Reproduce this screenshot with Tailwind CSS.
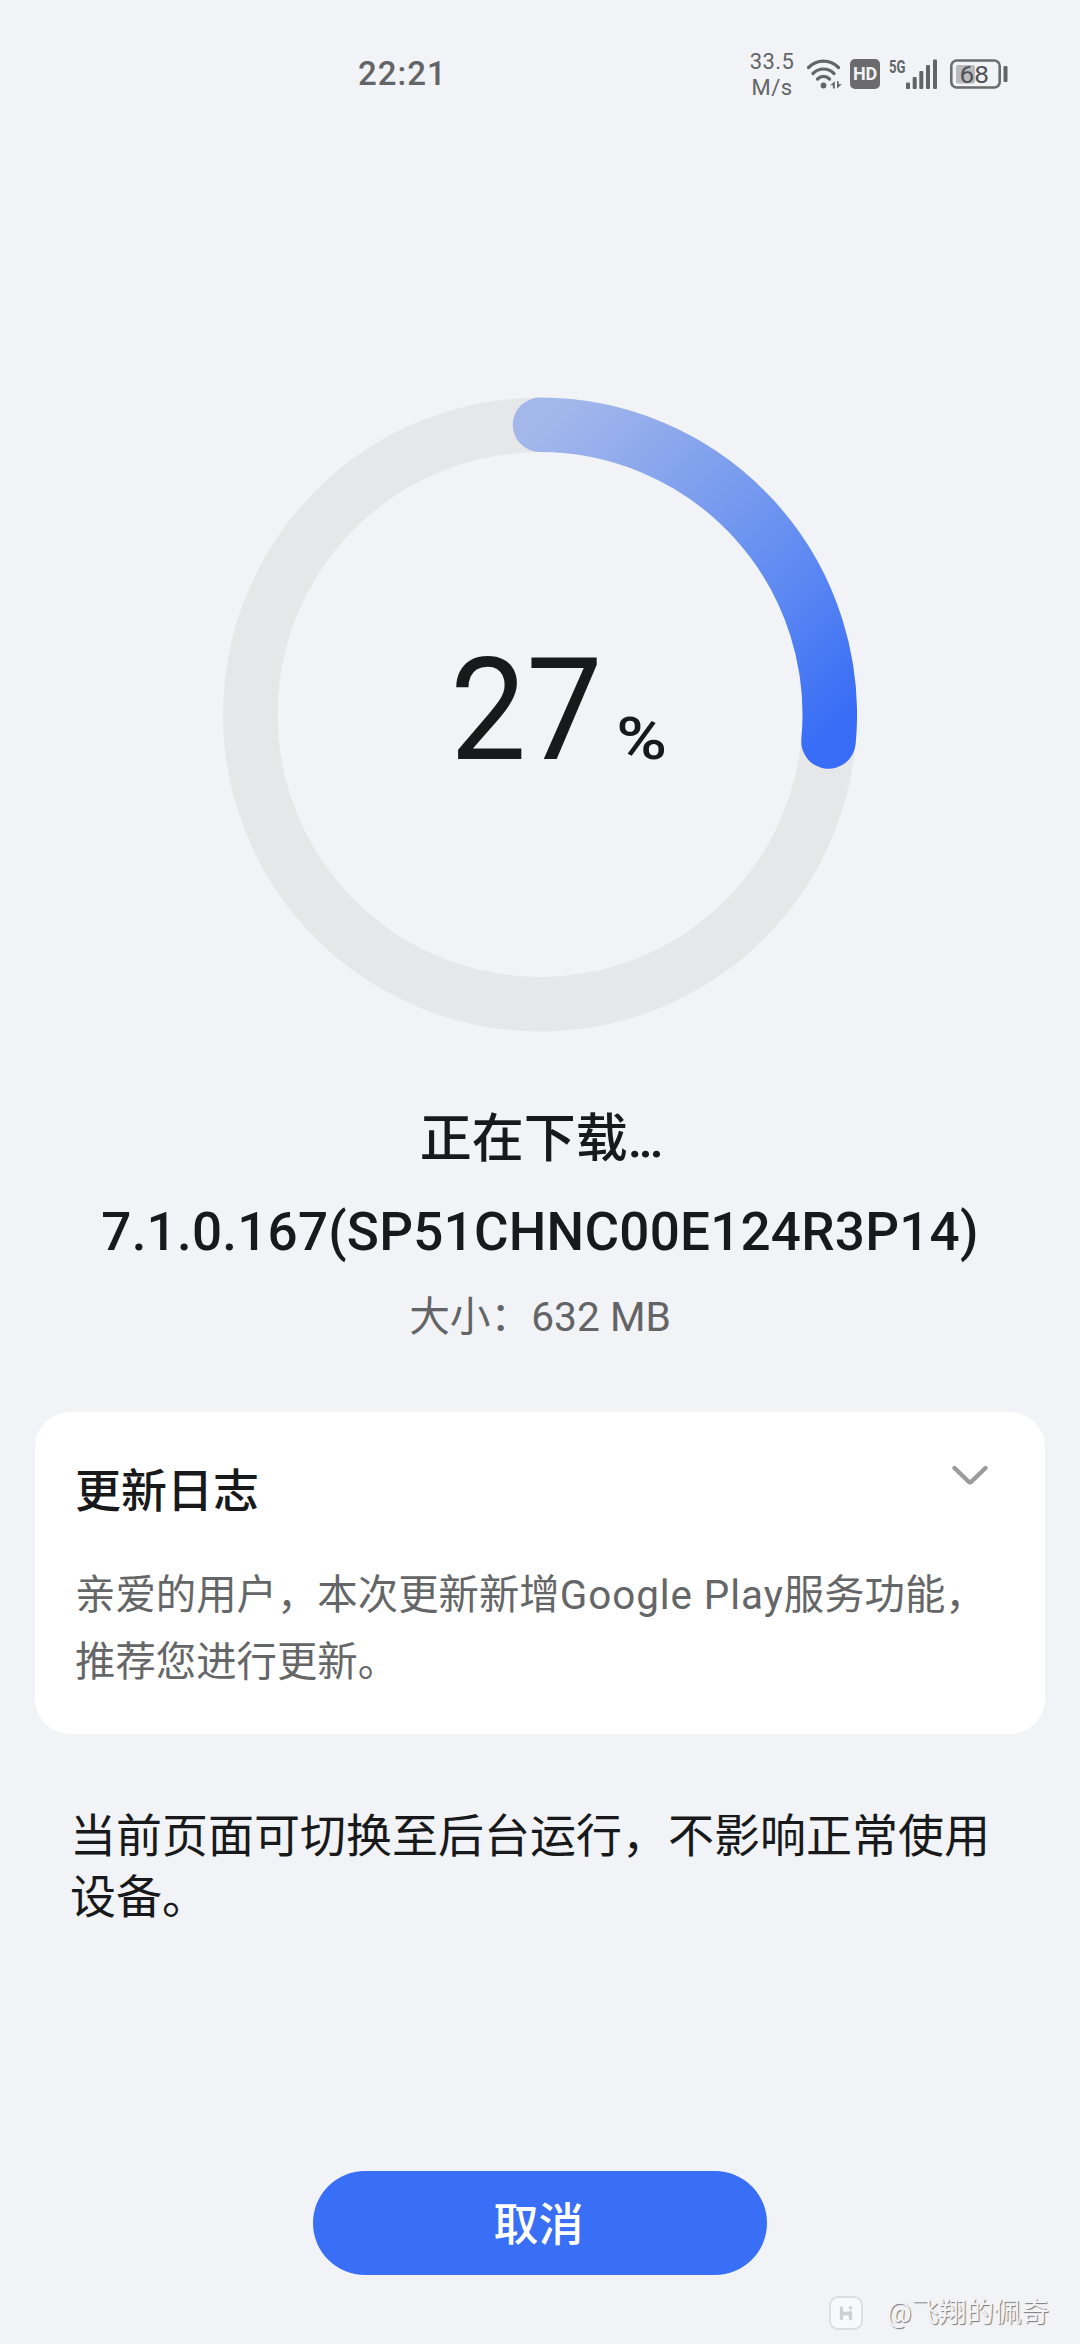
<!DOCTYPE html>
<html lang="zh-CN">
<head>
<meta charset="utf-8">
<title>系统更新</title>
<script src="https://cdn.jsdelivr.net/npm/@tailwindcss/browser@4"></script>
</head>
<body class="bg-[#f1f3f7]">
<div class="flex h-[2344px] w-[1080px] flex-col overflow-hidden bg-[#f1f3f7] font-['Roboto','Noto_Sans_CJK_SC',sans-serif] text-[#18191a]">

  <!-- status bar -->
  <header class="flex h-[148px] shrink-0 items-center justify-between pr-[72px] pl-[358px] text-[#636466]">
    <span class="text-[33px] leading-[40px] font-medium tracking-[1px]">22:21</span>
    <div class="flex items-center">
      <div class="mr-[11px] w-[46px] pt-[1px] text-center text-[22px] leading-[26px] tracking-[0.4px]">33.5<br>M/s</div>
      <svg class="mr-[8px] h-[32px] w-[36px]" viewBox="0 0 36 32" fill="none" stroke="#636466" stroke-width="3.2" stroke-linecap="round">
        <path d="M2.500 9.500C11 1 24 1 32.500 9.500"/>
        <path d="M7 15.500C13 9.500 22 9.500 28 15.500"/>
        <path d="M11.500 21C15 17.500 20 17.500 23.500 21"/>
        <circle cx="17.500" cy="27.500" r="2.900" fill="#636466" stroke="none"/>
        <path d="M28.800 23.200V30.500H26.900V27.300H24.200ZM31 30.500V23.200H32.700V26.300H35.800Z" fill="#636466" stroke="none"/>
      </svg>
      <div class="mr-[9px] flex h-[30px] w-[30px] items-center justify-center rounded-[5px] bg-[#6b6b6d] text-[18px] leading-none font-bold tracking-[-0.3px] text-[#f1f3f7]">HD</div>
      <svg class="mr-[12px] h-[34px] w-[49px] overflow-visible" viewBox="0 -1 49 34" fill="#636466">
        <text x="0" y="14.500" font-size="18" font-weight="700" textLength="16.500" lengthAdjust="spacingAndGlyphs">5G</text>
        <rect x="17" y="24.500" width="4" height="6.500" rx="1"/>
        <rect x="23.700" y="19" width="4" height="12" rx="1"/>
        <rect x="30.300" y="13" width="4" height="18" rx="1"/>
        <rect x="37" y="7" width="4" height="24" rx="1"/>
        <rect x="44" y="1.500" width="4" height="29.500" rx="1"/>
      </svg>
      <svg class="h-[32px] w-[58px]" viewBox="0 0 58 32">
        <rect x="1.300" y="2.500" width="48.400" height="27" rx="5.500" fill="none" stroke="#6b6b6d" stroke-width="2.600"/>
        <rect x="6" y="7" width="19" height="18.500" rx="2" fill="#b9babc"/>
        <rect x="53.500" y="8" width="4" height="16" rx="1" fill="#636466"/>
        <text x="9.500" y="24.500" font-size="24" fill="#505153" textLength="29.500" lengthAdjust="spacingAndGlyphs">68</text>
      </svg>
    </div>
  </header>

  <!-- progress ring -->
  <section class="mt-[249px] grid h-[635px] w-[634px] shrink-0 place-items-center self-center">
    <svg class="col-start-1 row-start-1 h-[635px] w-[634px]" viewBox="223 397 634 635" fill="none" stroke-width="54.500">
      <defs>
        <linearGradient id="arc" gradientUnits="userSpaceOnUse" x1="540" y1="425" x2="840" y2="725">
          <stop offset="0" stop-color="#a3b7ea"/>
          <stop offset="0.180" stop-color="#92acec"/>
          <stop offset="0.500" stop-color="#7096ef"/>
          <stop offset="0.750" stop-color="#5583f3"/>
          <stop offset="0.920" stop-color="#4073f4"/>
          <stop offset="1" stop-color="#386cf7"/>
        </linearGradient>
      </defs>
      <circle cx="540" cy="714.500" r="289.700" stroke="#e6e7e9"/>
      <path d="M540 424.800A289.700 289.700 0 0 1 828.500 741.500" stroke="url(#arc)" stroke-linecap="round"/>
    </svg>
    <div class="col-start-1 row-start-1 flex items-baseline pr-[2px] pb-[9px] pl-[39px]">
      <span class="origin-left scale-x-[0.95] text-[143px] leading-[160px]">27</span>
      <span class="ml-[12px] origin-right scale-x-[1.15] text-[60px] leading-[60px] font-medium">%</span>
    </div>
  </section>

  <!-- package information -->
  <section class="mt-[68px] flex shrink-0 flex-col items-center whitespace-nowrap">
    <h1 class="text-[52px] leading-[80px] font-medium">正在下载<span class="tracking-[-3.600px]">...</span></h1>
    <p class="mt-[12px] text-[53px] leading-[80px] font-medium tracking-[0.230px]">7.1.0.167(SP51CHNC00E124R3P14)</p>
    <p class="mt-[15px] text-[40.700px] leading-[60px] text-[#636466]">大小：632 MB</p>
  </section>

  <!-- change log -->
  <section class="mx-[35px] mt-[65px] h-[322px] shrink-0 rounded-[35px] bg-white pt-[49px] pr-[57px] pl-[40px]">
    <div class="flex justify-between">
      <h2 class="text-[46px] leading-[60px] font-medium">更新日志</h2>
      <svg class="mt-[3px] h-[22px] w-[36px]" viewBox="0 0 36 22" fill="none" stroke="#9b9b9c" stroke-width="4.400" stroke-linecap="round" stroke-linejoin="round"><path d="M2.500 4L16.500 17.500Q18 18.800 19.500 17.500L33.500 4"/></svg>
    </div>
    <p class="mt-[41px] text-[40.400px] leading-[67.400px] whitespace-nowrap text-[#656667]">亲爱的用户，本次更新新增<span class="tracking-[0.950px]">Google Play</span>服务功能，<br>推荐您进行更新。</p>
  </section>

  <p class="mt-[72px] ml-[70px] shrink-0 text-[46px] leading-[61px] whitespace-nowrap">当前页面可切换至后台运行，不影响正常使用<br>设备。</p>

  <button class="mt-[243px] h-[104px] w-[454px] shrink-0 self-center rounded-full bg-[#396ef7] pt-[5px] pr-[3px] text-[45px] leading-[60px] font-medium text-white">取消</button>

  <!-- author mark -->
  <footer class="mt-[20px] mr-[31px] flex shrink-0 items-center self-end">
    <svg class="mr-[23px] h-[36px] w-[36px]" viewBox="0 0 36 36" fill="none" stroke-linecap="round">
      <rect x="2" y="2" width="32" height="32" rx="8" fill="#f8f9fb" stroke="#dddee1" stroke-width="2"/>
      <path d="M13.500 13v10.500M22.500 17.500v6M14 18.500h8" stroke="#cfd0d5" stroke-width="3.400"/>
      <circle cx="22.500" cy="12.800" r="1.900" fill="#cfd0d5"/>
    </svg>
    <span class="text-[27.500px] leading-[36px] text-[#f4f4f6] text-shadow-[1px_1px_1px_#77787b]">@飞翔的佩奇</span>
  </footer>
</div>
</body>
</html>
